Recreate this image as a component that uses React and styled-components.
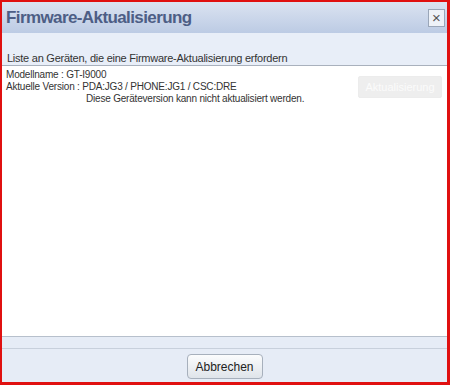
import React from "react";
import styled, { createGlobalStyle } from "styled-components";

const Global = createGlobalStyle`
  html, body { margin: 0; padding: 0; background: #fff; }
  body { font-family: "Liberation Sans", Arial, sans-serif; }
`;

const Frame = styled.div`
  box-sizing: border-box;
  width: 450px;
  height: 385px;
  border-style: solid;
  border-color: #e01010;
  border-width: 2px 3px 3px 2px;
  display: flex;
  flex-direction: column;
  background: #fff;
`;

const TitleBar = styled.div`
  height: 31px;
  display: flex;
  align-items: center;
  justify-content: space-between;
  padding: 0 2px 0 4px;
  background: linear-gradient(#dbe3f1, #bccbe4);
`;

const Title = styled.div`
  font-size: 17px;
  font-weight: bold;
  letter-spacing: -0.6px;
  color: #4d5e85;
`;

const Close = styled.button`
  box-sizing: border-box;
  width: 17px;
  height: 18px;
  padding: 0;
  border: 1px solid #9aa6b8;
  background: #eef2f8;
  color: #555;
  font-size: 15px;
  line-height: 14px;
  font-family: "Liberation Sans", Arial, sans-serif;
`;

const SubHeader = styled.div`
  height: 33px;
  box-sizing: border-box;
  display: flex;
  align-items: flex-end;
  padding: 0 0 1px 5px;
  background: #e8eef8;
  border-bottom: 1px solid #a9b1bd;
  font-size: 11px;
  letter-spacing: -0.25px;
  color: #333;
`;

const List = styled.div`
  flex: 1;
  background: #fff;
  padding: 3px 5px 3px 4px;
  display: flex;
  justify-content: space-between;
  align-items: flex-start;
`;

const Info = styled.div`
  font-size: 10px;
  line-height: 12px;
  letter-spacing: -0.2px;
  color: #333;
`;

const Indent = styled.div`
  padding-left: ${(p) => p.$indent}px;
`;

const UpdateButton = styled.button`
  width: 84px;
  height: 22px;
  margin-top: 7px;
  padding: 0;
  border: 1px solid #ececec;
  border-radius: 2px;
  background: #eeeeee;
  color: #fbfbfb;
  font-size: 11px;
  font-family: "Liberation Sans", Arial, sans-serif;
`;

const Footer = styled.div`
  height: 46px;
  box-sizing: border-box;
  border-top: 1px solid #b7c0cc;
  background: #e6ecf6;
  display: flex;
  flex-direction: column;
`;

const FooterBand = styled.div`
  height: 11px;
  border-bottom: 1px solid #c8d0dc;
`;

const FooterRow = styled.div`
  flex: 1;
  display: flex;
  justify-content: center;
  align-items: center;
`;

const CancelButton = styled.button`
  width: 76px;
  height: 25px;
  border: 1px solid #a7b0bc;
  border-radius: 4px;
  background: linear-gradient(#fbfcfd, #dfe4ea);
  color: #222;
  font-size: 12px;
  font-family: "Liberation Sans", Arial, sans-serif;
  margin-top: 2px;
`;

const App = () => {
  return (
    <>
      <Global />
      <Frame>
        <TitleBar>
          <Title>Firmware-Aktualisierung</Title>
          <Close>×</Close>
        </TitleBar>
        <SubHeader>Liste an Geräten, die eine Firmware-Aktualisierung erfordern</SubHeader>
        <List>
          <Info>
            <div>Modellname : GT-I9000</div>
            <div>Aktuelle Version : PDA:JG3 / PHONE:JG1 / CSC:DRE</div>
            <Indent $indent={80}>Diese Geräteversion kann nicht aktualisiert werden.</Indent>
          </Info>
          <UpdateButton disabled>Aktualisierung</UpdateButton>
        </List>
        <Footer>
          <FooterBand />
          <FooterRow>
            <CancelButton>Abbrechen</CancelButton>
          </FooterRow>
        </Footer>
      </Frame>
    </>
  );
};

export default App;
